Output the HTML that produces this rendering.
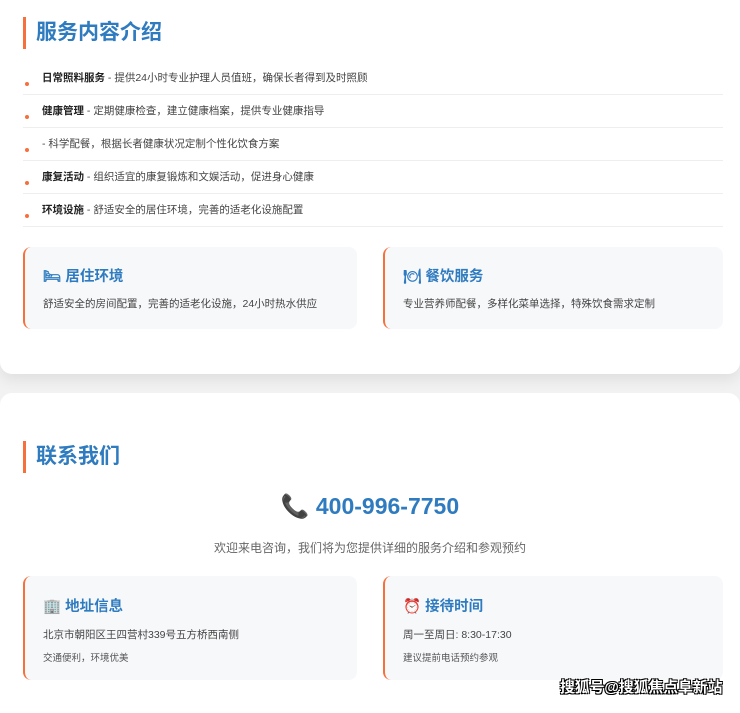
<!DOCTYPE html>
<html><head><meta charset="utf-8"><style>
*{margin:0;padding:0;box-sizing:border-box}
body{width:740px;height:702px;background:#f2f2f2;font-family:"Liberation Sans","Noto Sans CJK SC",sans-serif;position:relative;overflow:hidden;color:#333}
.card1{position:absolute;left:0;top:0;width:740px;height:374px;background:#fff;border-radius:0 0 12px 12px;box-shadow:0 6px 14px rgba(0,0,0,.08)}
.card2{position:absolute;left:0;top:393px;width:740px;height:320px;background:#fff;border-radius:12px 12px 0 0}
.h{position:absolute;left:23px;border-left:3px solid #f5703c;padding-left:10px;font-size:21px;font-weight:bold;color:#2f7bbf;line-height:32px}
.li{position:absolute;left:23px;width:700px;height:33px;border-bottom:1px solid #eee;font-size:10.5px;line-height:33px;padding-left:19px;color:#444}
.li:before{content:"";position:absolute;left:2px;top:20px;width:4px;height:4px;border-radius:50%;background:#f5703c}
.li b{color:#222}
.box{position:absolute;background:#f7f8fa;border-left:2px solid #f5703c;border-radius:8px;width:340px}
.box .t{position:absolute;left:18px;font-size:14.5px;font-weight:bold;color:#2f7bbf}
.box .d{position:absolute;left:18px;font-size:10.5px;color:#444}
</style></head><body>
<div class="card1">
<div class="h" style="top:17px">服务内容介绍</div>
<div class="li" style="top:62px"><b>日常照料服务</b> - 提供24小时专业护理人员值班，确保长者得到及时照顾</div>
<div class="li" style="top:95px"><b>健康管理</b> - 定期健康检查，建立健康档案，提供专业健康指导</div>
<div class="li" style="top:128px">- 科学配餐，根据长者健康状况定制个性化饮食方案</div>
<div class="li" style="top:161px"><b>康复活动</b> - 组织适宜的康复锻炼和文娱活动，促进身心健康</div>
<div class="li" style="top:194px"><b>环境设施</b> - 舒适安全的居住环境，完善的适老化设施配置</div>
<div class="box" style="left:23px;top:247px;height:82px;width:334px"><div class="t" style="top:18px">🛏 居住环境</div><div class="d" style="top:49px">舒适安全的房间配置，完善的适老化设施，24小时热水供应</div></div>
<div class="box" style="left:383px;top:247px;height:82px"><div class="t" style="top:18px">🍽 餐饮服务</div><div class="d" style="top:49px">专业营养师配餐，多样化菜单选择，特殊饮食需求定制</div></div>
</div>
<div class="card2">
<div class="h" style="top:48px">联系我们</div>
<div style="position:absolute;left:0;width:740px;top:100px;text-align:center;font-size:23px;font-weight:bold;color:#2f7bbf">📞 400-996-7750</div>
<div style="position:absolute;left:0;width:740px;top:146px;text-align:center;font-size:12px;color:#666">欢迎来电咨询，我们将为您提供详细的服务介绍和参观预约</div>
<div class="box" style="left:23px;top:183px;height:104px;width:334px"><div class="t" style="top:19px">🏢 地址信息</div><div class="d" style="top:51px">北京市朝阳区王四营村339号五方桥西南侧</div><div class="d" style="top:74px;font-size:9.5px;color:#555">交通便利，环境优美</div></div>
<div class="box" style="left:383px;top:183px;height:104px"><div class="t" style="top:19px">⏰ 接待时间</div><div class="d" style="top:51px">周一至周日: 8:30-17:30</div><div class="d" style="top:74px;font-size:9.5px;color:#555">建议提前电话预约参观</div></div>
</div>
<div style="position:absolute;left:560px;top:676px;font-size:14.8px;font-weight:bold;color:#fff;text-shadow:-1px -1px 0 #000,1px -1px 0 #000,-1px 1px 0 #000,1px 1px 0 #000">搜狐号@搜狐焦点阜新站</div>
</body></html>
